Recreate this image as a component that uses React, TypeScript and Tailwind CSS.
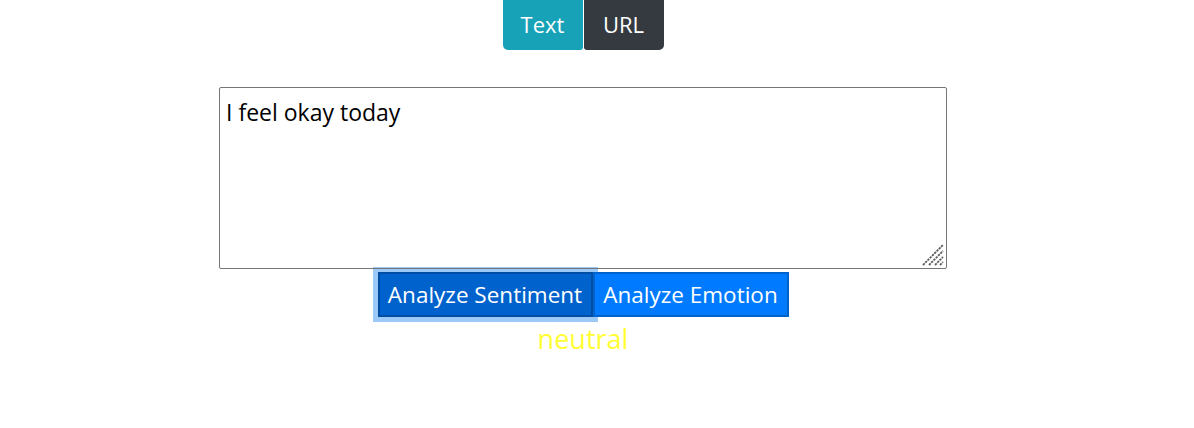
import React from "react";

export default function App() {
  return (
    <div className="w-[1166px] min-h-[428px] bg-white flex flex-col items-center" style={{ fontFamily: '"Open Sans", "Noto Sans", sans-serif' }}>
      <div className="flex">
        <button className="w-[80px] h-[50px] pb-[2px] bg-[#17a2b8] text-white text-[22px] rounded-b-[5px] rounded-br-[3px] flex items-center justify-center">Text</button>
        <button className="w-[80px] h-[50px] pb-[2px] ml-[1px] bg-[#343a40] text-white text-[22px] rounded-b-[5px] rounded-bl-[3px] flex items-center justify-center">URL</button>
      </div>
      <div className="relative mt-[37px] w-[728px] h-[182px]">
        <textarea
          className="block w-full h-full resize-none border border-[#767676] rounded-[2px] px-[6px] pt-[10px] text-[23px] leading-[1.25] text-black outline-none"
          defaultValue="I feel okay today"
          style={{ fontFamily: '"Open Sans", "Noto Sans", sans-serif' }}
        />
        <svg className="absolute right-[3px] bottom-[3px]" width="22" height="22" viewBox="0 0 22 22">
          <g stroke="#5f5f5f" strokeWidth="1.8" strokeDasharray="2.4 0.8">
            <line x1="1" y1="21" x2="21" y2="1" />
            <line x1="7" y1="21" x2="21" y2="7" />
            <line x1="13" y1="21" x2="21" y2="13" />
            <line x1="18" y1="21" x2="21" y2="18" />
          </g>
        </svg>
      </div>
      <div className="flex mt-[3px]">
        <button className="h-[45px] w-[215px] bg-[#0062cc] border-2 border-[#004ea3] text-white text-[22.5px] flex items-center justify-center shadow-[0_0_0_5px_#9cc9f6]">Analyze Sentiment</button>
        <button className="h-[45px] w-[196px] bg-[#007bff] border-2 border-[#0062cc] text-white text-[22.5px] flex items-center justify-center">Analyze Emotion</button>
      </div>
      <div className="mt-[4px] text-[27px] text-[#ffff33] leading-[36px]">neutral</div>
    </div>
  );
}
